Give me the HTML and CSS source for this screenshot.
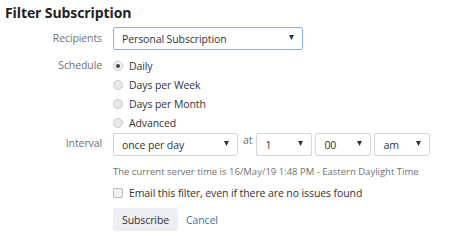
FILE: index.html
```html
<!DOCTYPE html>
<html>
<head>
    <meta charset="UTF-8">
    <title>Filter Subscription</title>
    <link rel="stylesheet" href="styles.css">
</head>
<body>
    <div class="dialog">
        <h1>Filter Subscription</h1>

        <div class="form">
            <div class="label recipients-label">Recipients</div>
            <div class="field">
                <div class="select select-wide focused">
                    <span>Personal Subscription</span>
                    <svg class="arrow" width="5" height="5" viewBox="0 0 5 5"><path d="M0 0H5L2.5 5Z"/></svg>
                </div>
            </div>

            <div class="label schedule-label">Schedule</div>
            <div class="field radios">
                <label class="radio-row"><span class="radio checked"></span>Daily</label>
                <label class="radio-row"><span class="radio"></span>Days per Week</label>
                <label class="radio-row"><span class="radio"></span>Days per Month</label>
                <label class="radio-row"><span class="radio"></span>Advanced</label>
            </div>

            <div class="label interval-label">Interval</div>
            <div class="field interval">
                <div class="select select-interval">
                    <span>once per day</span>
                    <svg class="arrow" width="5" height="5" viewBox="0 0 5 5"><path d="M0 0H5L2.5 5Z"/></svg>
                </div>
                <span class="at">at</span>
                <div class="select select-small">
                    <span>1</span>
                    <svg class="arrow" width="5" height="5" viewBox="0 0 5 5"><path d="M0 0H5L2.5 5Z"/></svg>
                </div>
                <div class="select select-small">
                    <span>00</span>
                    <svg class="arrow" width="5" height="5" viewBox="0 0 5 5"><path d="M0 0H5L2.5 5Z"/></svg>
                </div>
                <div class="select select-small">
                    <span>am</span>
                    <svg class="arrow" width="5" height="5" viewBox="0 0 5 5"><path d="M0 0H5L2.5 5Z"/></svg>
                </div>
            </div>

            <div></div>
            <div class="field hint">The current server time is 16/May/19 1:48 PM - Eastern Daylight Time</div>

            <div></div>
            <label class="field check-row"><span class="checkbox"></span>Email this filter, even if there are no issues found</label>

            <div></div>
            <div class="field buttons">
                <button class="btn">Subscribe</button>
                <a class="cancel" href="#">Cancel</a>
            </div>
        </div>
    </div>
</body>
</html>
```

FILE: styles.css
```css
body {
    margin: 0;
    font-family: "Open Sans", "Noto Sans", sans-serif;
    font-size: 10.5px;
    letter-spacing: -0.1px;
    color: #333333;
    background: #ffffff;
}

.dialog {
    padding: 2px 5px 0 5px;
}

h1 {
    margin: 0;
    font-size: 14px;
    font-weight: 700;
    line-height: 22px;
    letter-spacing: -0.1px;
    color: #222222;
}

.form {
    display: grid;
    grid-template-columns: 97px 1fr;
    column-gap: 11px;
    margin-top: 3px;
}

.label {
    text-align: right;
    color: #707070;
    line-height: 23px;
}

.schedule-label {
    margin-top: 6px;
    line-height: 19px;
}

.interval-label {
    margin-top: 1px;
    line-height: 20px;
}

/* selects */
.select {
    display: flex;
    align-items: center;
    justify-content: space-between;
    box-sizing: border-box;
    height: 23px;
    padding: 0 8px 1px 8px;
    border: 1px solid #d5d5d5;
    border-radius: 2px;
    background: #ffffff;
    color: #333333;
}

.select span {
    padding-top: 2px;
}

.select .arrow {
    fill: #333333;
    margin-top: -2px;
}

.focused {
    border-color: #8fb0dc;
}

.select-wide {
    width: 190px;
}

.select-interval {
    width: 125px;
}

.select-small {
    width: 56px;
}

.radios {
    display: flex;
    flex-direction: column;
    margin-top: 6px;
}

.radio-row {
    display: flex;
    align-items: center;
    gap: 6px;
    height: 19px;
}

.radio {
    box-sizing: border-box;
    width: 10px;
    height: 10px;
    border-radius: 50%;
    border: 1px solid #c8c8c8;
    background: #e8e8e8;
    display: flex;
    align-items: center;
    justify-content: center;
}

.radio.checked {
    background: #f4f4f4;
}

.radio.checked::after {
    content: "";
    width: 4px;
    height: 4px;
    border-radius: 50%;
    background: #444444;
}

.interval {
    display: flex;
    align-items: flex-start;
    gap: 3px;
    margin-top: 1px;
}

.at {
    color: #707070;
    line-height: 14px;
    padding: 0 1px 0 2px;
}

.hint {
    font-size: 9.5px;
    letter-spacing: 0;
    color: #707070;
    margin-top: 9px;
}

.check-row {
    display: flex;
    align-items: center;
    gap: 6px;
    margin-top: 8px;
}

.checkbox {
    box-sizing: border-box;
    width: 10px;
    height: 10px;
    border: 1px solid #b8b8b8;
    border-radius: 2px;
    background: #f2f2f2;
}

.buttons {
    display: flex;
    align-items: center;
    gap: 8px;
    margin-top: 8px;
}

.btn {
    font-family: inherit;
    font-size: 10.5px;
    letter-spacing: -0.1px;
    color: #333333;
    background: #eceef1;
    border: none;
    border-radius: 3px;
    height: 23px;
    padding: 0 9px;
}

.cancel {
    color: #3b73af;
    text-decoration: none;
}
```
